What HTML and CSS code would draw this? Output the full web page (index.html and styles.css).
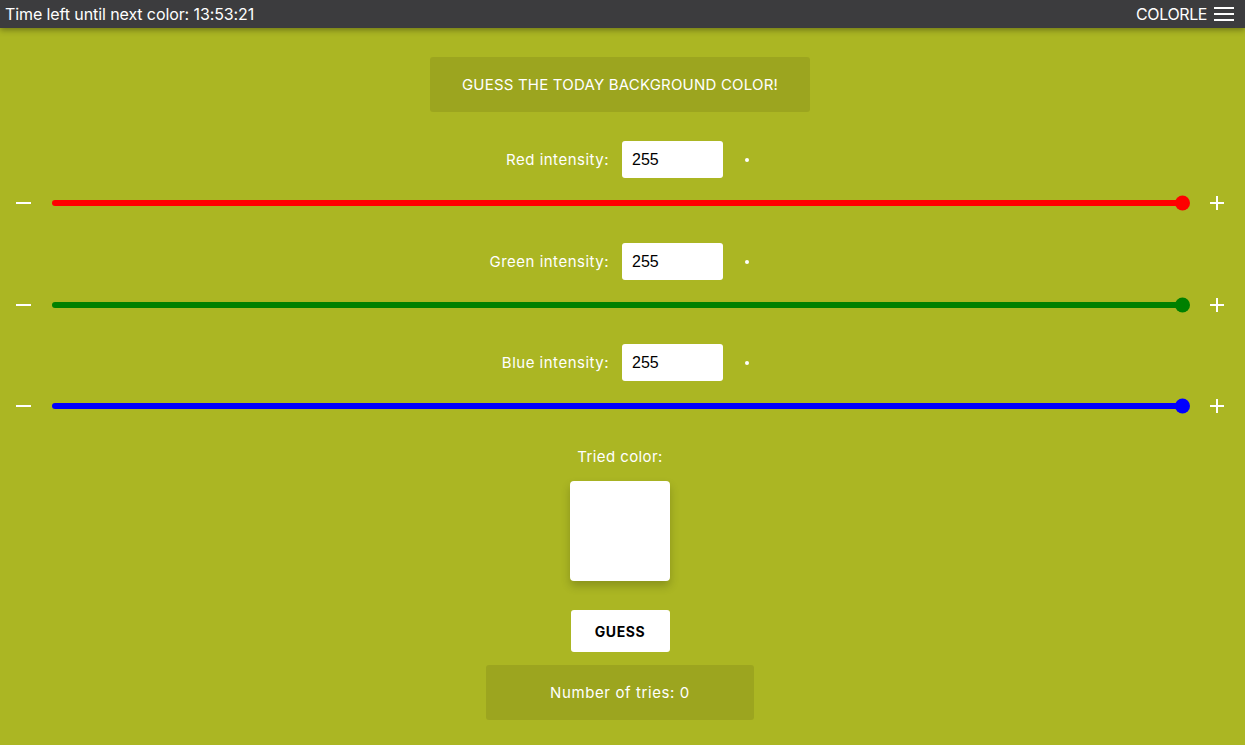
FILE: index.html
```html
<!DOCTYPE html>
<html lang="en">
<head>
<meta charset="utf-8">
<title>Colorle</title>
<link rel="stylesheet" href="styles.css">
</head>
<body>
<header class="topbar">
  <div class="timer">Time left until next color: 13:53:21</div>
  <div class="brand">COLORLE
    <svg class="burger" width="20" height="16" viewBox="0 0 20 16"><rect x="0" y="1" width="20" height="2" fill="#fff"/><rect x="0" y="7" width="20" height="2" fill="#fff"/><rect x="0" y="13" width="20" height="2" fill="#fff"/></svg>
  </div>
</header>
<main class="page">
  <div class="title">GUESS THE TODAY BACKGROUND COLOR!</div>

  <section class="channel">
    <div class="field">
      <label class="lbl">Red intensity:</label>
      <div class="val"><input class="num" type="text" value="255"><span class="dot"></span></div>
    </div>
    <div class="slider">
      <span class="minus"></span>
      <div class="track red"><span class="thumb red"></span></div>
      <span class="plus"></span>
    </div>
  </section>

  <section class="channel">
    <div class="field">
      <label class="lbl">Green intensity:</label>
      <div class="val"><input class="num" type="text" value="255"><span class="dot"></span></div>
    </div>
    <div class="slider">
      <span class="minus"></span>
      <div class="track green"><span class="thumb green"></span></div>
      <span class="plus"></span>
    </div>
  </section>

  <section class="channel">
    <div class="field">
      <label class="lbl">Blue intensity:</label>
      <div class="val"><input class="num" type="text" value="255"><span class="dot"></span></div>
    </div>
    <div class="slider">
      <span class="minus"></span>
      <div class="track blue"><span class="thumb blue"></span></div>
      <span class="plus"></span>
    </div>
  </section>

  <div class="center">
    <div class="tried">Tried color:</div>
    <div class="swatch"></div>
    <button class="guess">GUESS</button>
    <div class="tries">Number of tries: 0</div>
  </div>
</main>
</body>
</html>
```
FILE: styles.css
```css
* { box-sizing: border-box; }
html, body { margin: 0; padding: 0; }
body {
  background: #abb623;
  font-family: Inter, "Open Sans", "Liberation Sans", sans-serif;
  color: #fff;
  height: 745px;
  overflow: hidden;
}
.topbar {
  height: 28px;
  background: #3c3c3e;
  display: flex;
  align-items: center;
  justify-content: space-between;
  padding: 0 11px 0 5px;
  box-shadow: 0 2px 6px rgba(0,0,0,0.35);
  font-size: 16px;
  letter-spacing: -0.1px;
}
.brand { display: flex; align-items: center; gap: 7px; letter-spacing: -0.4px; }
.burger { display: block; }
.page {
  display: flex;
  flex-direction: column;
  align-items: center;
  padding-top: 29px;
}
.title {
  width: 380px;
  height: 55px;
  margin-right: 5px;
  background: #9ca51f;
  border-radius: 3px;
  display: flex;
  align-items: center;
  justify-content: center;
  font-size: 15px;
  letter-spacing: 0.2px;
}
.channel { width: 100%; display: flex; flex-direction: column; }
.field {
  display: grid;
  grid-template-columns: 1fr 1fr;
  align-items: center;
  margin-top: 29px;
  padding-right: 5px;
}
.channel + .channel .field { margin-top: 30px; }
.channel + .channel + .channel .field { margin-top: 29px; }
.lbl {
  justify-self: end;
  padding-right: 11px;
  font-size: 15px;
  letter-spacing: 0.5px;
}
.val { display: flex; align-items: center; padding-left: 2px; }
.num {
  width: 101px;
  height: 37px;
  border: none;
  border-radius: 3px;
  background: #fff;
  padding: 0 10px;
  font-family: "Liberation Sans", Arial, sans-serif;
  font-size: 16px;
  color: #000;
  outline: none;
}
.dot {
  width: 4px;
  height: 4px;
  border-radius: 50%;
  background: #fff;
  margin-left: 22px;
}
.slider {
  display: flex;
  align-items: center;
  height: 20px;
  margin-top: 15px;
  padding: 0 21px 0 16px;
}
.minus {
  width: 15px;
  height: 2px;
  background: #fff;
}
.plus {
  width: 14px;
  height: 14px;
  position: relative;
  margin-left: 27px;
}
.plus::before, .plus::after {
  content: "";
  position: absolute;
  background: #fff;
}
.plus::before { left: 0; top: 6px; width: 14px; height: 2px; }
.plus::after { left: 6px; top: 0; width: 2px; height: 14px; }
.track {
  flex: 1;
  height: 6px;
  border-radius: 3px;
  margin-left: 21px;
  position: relative;
}
.thumb {
  position: absolute;
  right: -7px;
  top: 50%;
  width: 15px;
  height: 15px;
  border-radius: 50%;
  transform: translateY(-50%);
}
.red { background: #ff0000; }
.green { background: #008000; }
.blue { background: #0000ff; }
.center {
  display: flex;
  flex-direction: column;
  align-items: center;
  margin-right: 5px;
}
.tried {
  margin-top: 31px;
  font-size: 15px;
  letter-spacing: 0.4px;
}
.swatch {
  width: 100px;
  height: 100px;
  background: #fff;
  border-radius: 4px;
  margin-top: 15px;
  box-shadow: 0 5px 10px rgba(0,0,0,0.2);
}
.guess {
  margin-top: 29px;
  width: 99px;
  height: 42px;
  border: none;
  border-radius: 3px;
  background: #fff;
  color: #000;
  font-family: Inter, "Open Sans", "Liberation Sans", sans-serif;
  font-weight: 700;
  font-size: 14px;
  letter-spacing: 0.6px;
}
.tries {
  margin-top: 13px;
  width: 268px;
  height: 55px;
  background: #9ca51f;
  border-radius: 3px;
  display: flex;
  align-items: center;
  justify-content: center;
  font-size: 15px;
  letter-spacing: 0.6px;
}
```
